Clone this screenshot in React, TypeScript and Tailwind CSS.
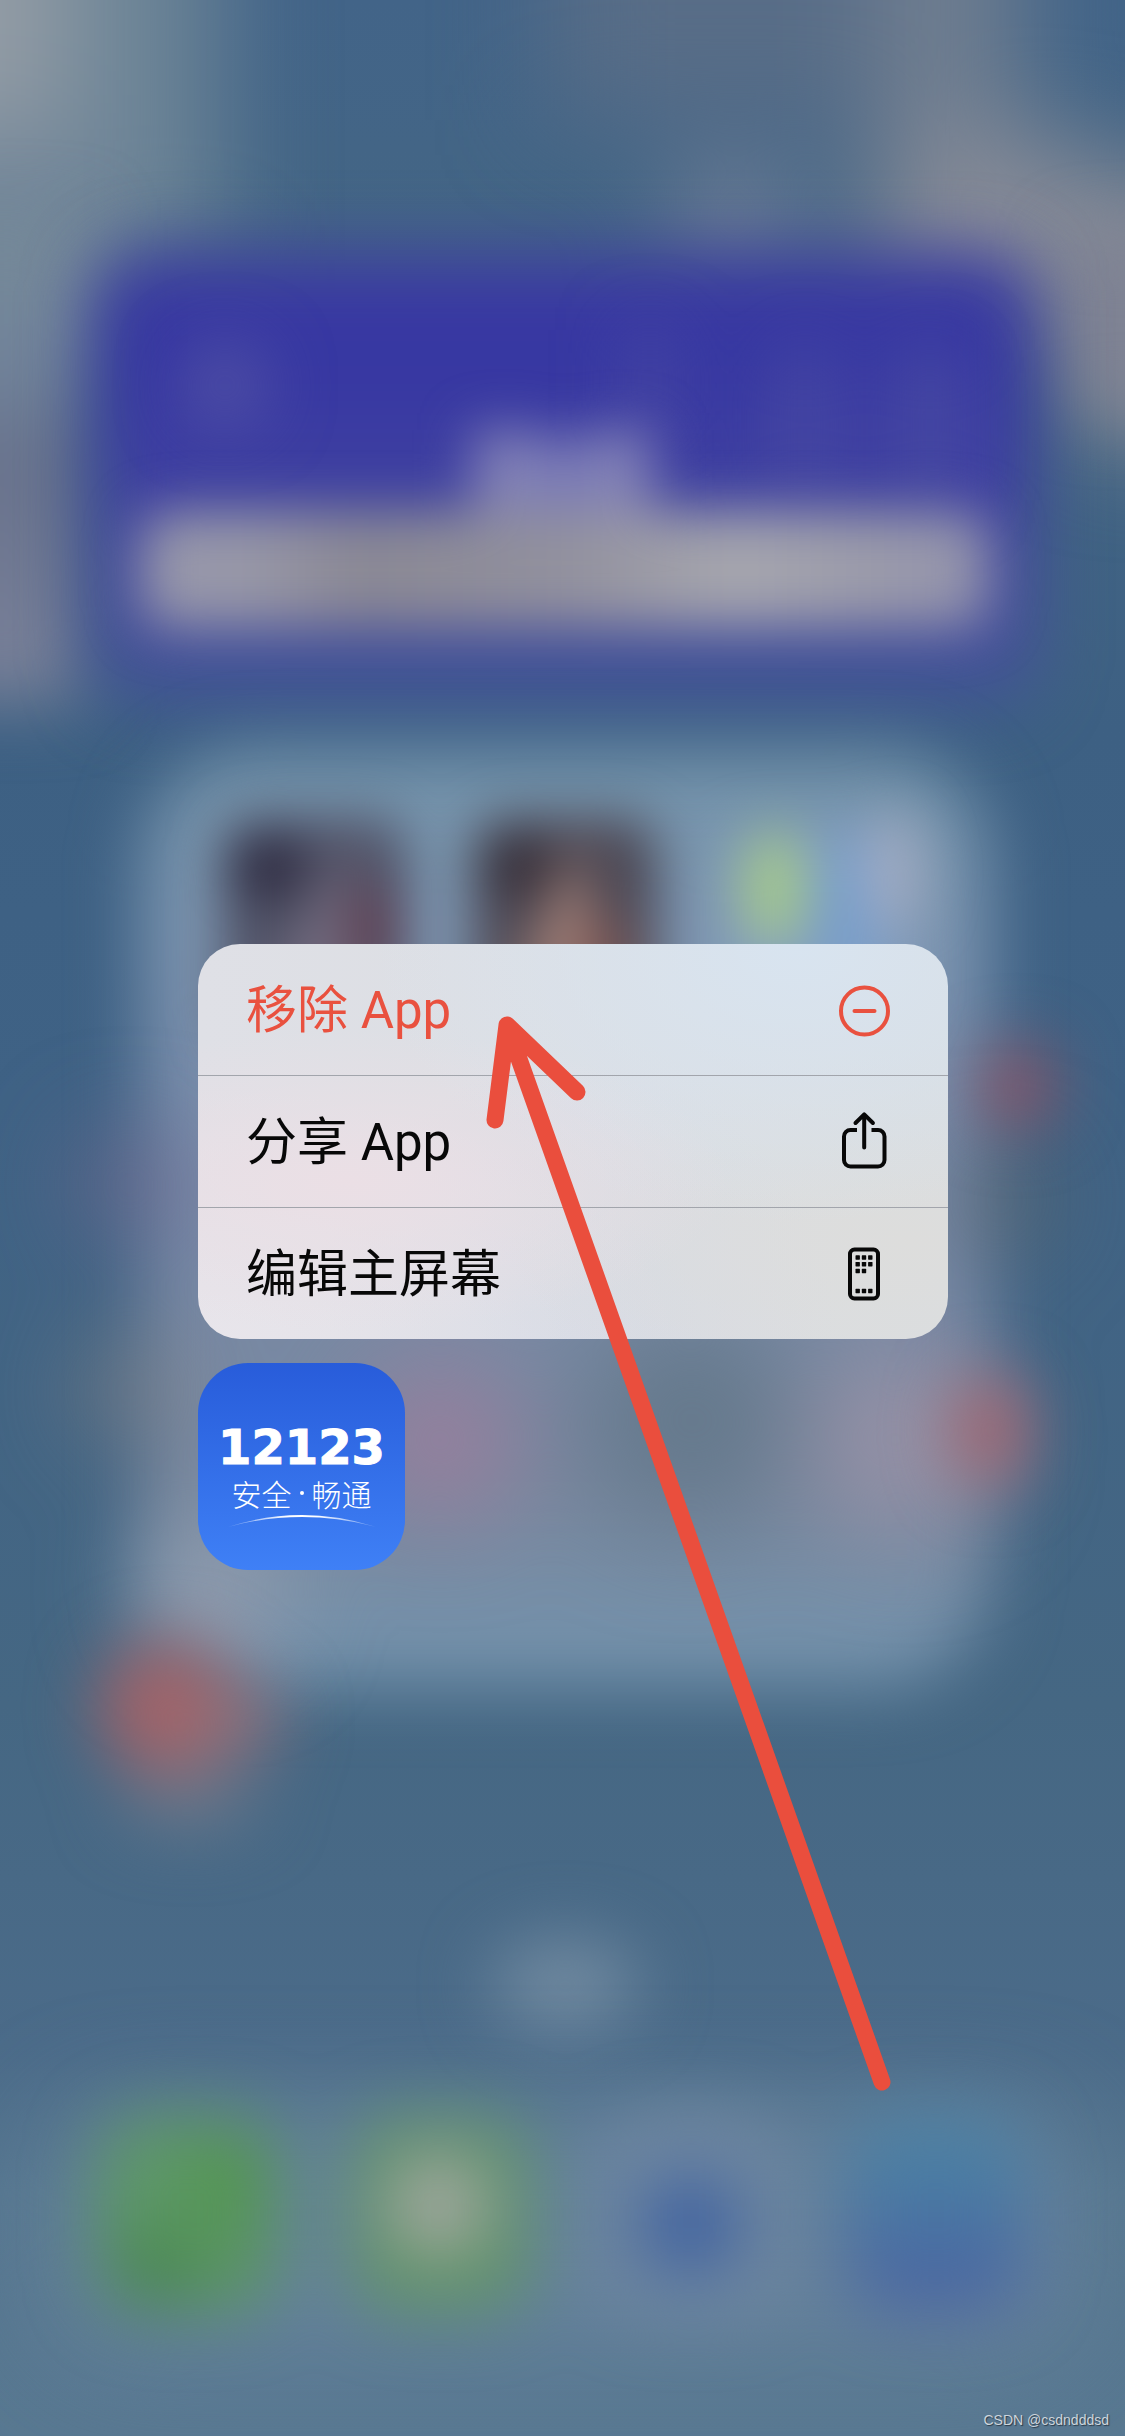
import type { ReactNode } from "react";

const sansStack = "font-[Roboto,'Noto_Sans_CJK_SC',sans-serif]";

/* ── Icons ── */
function RemoveIcon() {
  return (
    <svg viewBox="0 0 72 72" className="size-18 shrink-0" fill="none" stroke="currentColor" strokeWidth="4" aria-hidden="true">
      <circle cx="36.5" cy="37" r="23.5" />
      <path d="M26.500 37h20" strokeLinecap="round" />
    </svg>
  );
}

function ShareIcon() {
  return (
    <svg viewBox="0 0 72 72" className="size-18 shrink-0" fill="none" stroke="currentColor" strokeWidth="4" aria-hidden="true">
      <path d="M29 24h-6.500a6.500 6.500 0 0 0-6.500 6.500v23.500a6.500 6.500 0 0 0 6.500 6.500h27.500a6.500 6.500 0 0 0 6.500-6.500V30.500a6.500 6.500 0 0 0-6.500-6.500H43.500" />
      <path d="M36.200 41.500V8.500M27.500 17l8.700-8.700 8.700 8.700" strokeLinecap="round" strokeLinejoin="round" />
    </svg>
  );
}

const phoneDots = [
  [29.7, 19.5], [36, 19.5], [42.3, 19.5],
  [29.7, 26.2], [36, 26.2], [42.3, 26.2],
  [29.7, 33], [36, 33],
  [29.7, 53], [36, 53], [42.3, 53],
];

function HomeScreenIcon() {
  return (
    <svg viewBox="0 0 72 72" className="size-18 shrink-0" fill="currentColor" aria-hidden="true">
      <rect x="22" y="11.500" width="28" height="49" rx="4.500" fill="none" stroke="currentColor" strokeWidth="4" />
      {phoneDots.map(([x, y]) => (
        <rect key={`${x}-${y}`} x={x - 2.2} y={y - 2.2} width="4.400" height="4.400" rx="0.600" />
      ))}
    </svg>
  );
}

/* ── Blurred home screen ── */
function Wallpaper() {
  return (
    <svg
      viewBox="0 0 1125 2436"
      preserveAspectRatio="none"
      className="absolute inset-0 size-full"
      aria-hidden="true"
    >
      <defs>
        <filter id="b20" x="-100%" y="-100%" width="300%" height="300%" colorInterpolationFilters="sRGB">
          <feGaussianBlur stdDeviation="26" />
        </filter>
        <filter id="b30" x="-100%" y="-100%" width="300%" height="300%" colorInterpolationFilters="sRGB">
          <feGaussianBlur stdDeviation="34" />
        </filter>
        <filter id="b50" x="-100%" y="-100%" width="300%" height="300%" colorInterpolationFilters="sRGB">
          <feGaussianBlur stdDeviation="52" />
        </filter>
        <linearGradient id="sky" x1="0" y1="0" x2="0" y2="1">
          <stop offset="0" stopColor="#426488" />
          <stop offset="0.12" stopColor="#446684" />
          <stop offset="0.3" stopColor="#3d6083" />
          <stop offset="0.45" stopColor="#3f6285" />
          <stop offset="0.7" stopColor="#456783" />
          <stop offset="0.84" stopColor="#4b6b89" />
          <stop offset="0.9" stopColor="#55768f" />
          <stop offset="1" stopColor="#587891" />
        </linearGradient>
        <linearGradient id="leftEdge" x1="0" y1="0" x2="0" y2="1">
          <stop offset="0" stopColor="#768a98" />
          <stop offset="0.3" stopColor="#71839a" />
          <stop offset="0.5" stopColor="#68728c" />
          <stop offset="1" stopColor="#7b829a" />
        </linearGradient>
        <linearGradient id="widget" x1="0" y1="0" x2="0" y2="1">
          <stop offset="0" stopColor="#3f40a0" />
          <stop offset="0.2" stopColor="#3535a2" />
          <stop offset="0.5" stopColor="#3e3fa1" />
          <stop offset="0.85" stopColor="#47509c" />
          <stop offset="1" stopColor="#3d5592" />
        </linearGradient>
        <linearGradient id="bar" x1="0" y1="0" x2="1" y2="0">
          <stop offset="0" stopColor="#9696ab" />
          <stop offset="0.12" stopColor="#9898a8" />
          <stop offset="0.26" stopColor="#8a8894" />
          <stop offset="0.5" stopColor="#92919e" />
          <stop offset="0.7" stopColor="#a6a6ae" />
          <stop offset="0.85" stopColor="#9b9baa" />
          <stop offset="1" stopColor="#9292ac" />
        </linearGradient>
        <linearGradient id="folder" x1="0" y1="0" x2="0" y2="1">
          <stop offset="0" stopColor="#7393aa" />
          <stop offset="0.2" stopColor="#7e96b1" />
          <stop offset="0.45" stopColor="#7789a8" />
          <stop offset="0.8" stopColor="#78889f" />
          <stop offset="1" stopColor="#7494ae" />
        </linearGradient>
        <linearGradient id="store" x1="0" y1="0" x2="0" y2="1">
          <stop offset="0.2" stopColor="#4b80a3" />
          <stop offset="1" stopColor="#4961a2" />
        </linearGradient>
      </defs>

      <rect width="1125" height="2436" fill="url(#sky)" />

      {/* wallpaper highlights */}
      <g filter="url(#b50)">
        <rect x="-200" y="-200" width="270" height="330" fill="#939ca5" />
        <rect x="70" y="-200" width="150" height="460" fill="#6c8496" />
        <rect x="-200" y="130" width="320" height="240" fill="#728699" />
        <rect x="550" y="-150" width="340" height="270" fill="#586d87" />
        <rect x="875" y="-150" width="145" height="400" fill="#707e90" />
        <path d="M890 130L1010 130 1320 230V440H1080V330H870z" fill="#878b97" />
        <circle cx="735" cy="225" r="60" fill="#7b859b" />
      </g>
      <g filter="url(#b30)">
        <rect x="-100" y="220" width="186" height="482" fill="url(#leftEdge)" />
        <rect x="1070" y="240" width="160" height="170" fill="#7e8293" />
      </g>

      {/* widget */}
      <g filter="url(#b30)">
        <rect x="94" y="252" width="940" height="454" rx="50" fill="url(#widget)" />
      </g>
      <g filter="url(#b30)">
        <circle cx="225" cy="385" r="38" fill="#5656a5" />
        <rect x="630" y="330" width="40" height="100" fill="#4848a2" />
        <rect x="780" y="350" width="50" height="150" fill="#484aa2" />
        <rect x="900" y="350" width="60" height="150" fill="#484aa2" />
      </g>
      <g filter="url(#b20)">
        <rect x="474" y="430" width="60" height="120" fill="#8483b6" />
        <rect x="594" y="430" width="58" height="120" fill="#8483b6" />
        <rect x="524" y="440" width="80" height="100" fill="#7c7cb6" />
        <rect x="140" y="512" width="850" height="116" rx="30" fill="url(#bar)" />
      </g>

      {/* open folder */}
      <g filter="url(#b30)">
        <rect x="143" y="750" width="846" height="936" rx="110" fill="url(#folder)" />
      </g>
      <g filter="url(#b50)">
        <circle cx="440" cy="1440" r="75" fill="#9a7e9c" />
        <circle cx="690" cy="1420" r="105" fill="#65798c" />
        <circle cx="900" cy="1440" r="90" fill="#9691a6" />
        <circle cx="210" cy="1590" r="65" fill="#98a0b0" />
        <circle cx="130" cy="1390" r="42" fill="#8a8484" />
        <circle cx="130" cy="1185" r="44" fill="#76688f" />
        <circle cx="1000" cy="1200" r="42" fill="#5f6464" />
      </g>
      <g filter="url(#b20)">
        <rect x="222" y="818" width="184" height="230" rx="34" fill="#4e5064" />
        <ellipse cx="268" cy="866" rx="40" ry="32" fill="#2d2a40" />
        <path d="M265 990L345 840 355 1000z" fill="#736c80" />
        <ellipse cx="372" cy="930" rx="24" ry="48" fill="#5c3a4c" />
        <rect x="474" y="818" width="182" height="230" rx="34" fill="#4a4551" />
        <ellipse cx="518" cy="864" rx="38" ry="30" fill="#332c36" />
        <path d="M510 990L575 840 610 990z" fill="#a08078" />
        <ellipse cx="605" cy="955" rx="26" ry="36" fill="#7c5350" />
        <rect x="725" y="830" width="180" height="200" rx="34" fill="#849fc0" />
        <ellipse cx="774" cy="888" rx="34" ry="58" fill="#a3c78d" />
        <ellipse cx="846" cy="910" rx="30" ry="76" fill="#769dcc" />
        <ellipse cx="893" cy="872" rx="30" ry="60" fill="#a0abc2" />
      </g>
      <g filter="url(#b30)">
        <ellipse cx="1017" cy="1086" rx="34" ry="38" fill="#9c4f5d" />
        <ellipse cx="990" cy="1430" rx="36" ry="54" fill="#a8636c" />
      </g>
      <g filter="url(#b30)">
        <ellipse cx="168" cy="1708" rx="70" ry="66" fill="#a36368" />
        <ellipse cx="238" cy="1720" rx="42" ry="36" fill="#94727c" />
        <ellipse cx="190" cy="1800" rx="70" ry="28" fill="#6b788b" />
        <ellipse cx="565" cy="1985" rx="74" ry="46" fill="#718aa0" />
      </g>

      {/* dock */}
      <g filter="url(#b50)">
        <rect x="50" y="2110" width="1030" height="245" rx="80" fill="#66829c" />
      </g>
      <g filter="url(#b30)">
        <rect x="97" y="2116" width="182" height="196" rx="50" fill="#599560" />
        <circle cx="160" cy="2180" r="30" fill="#629972" />
        <circle cx="225" cy="2180" r="38" fill="#52964c" />
        <circle cx="155" cy="2270" r="34" fill="#45844c" />
        <rect x="349" y="2116" width="182" height="196" rx="50" fill="#5f9366" />
        <circle cx="438" cy="2205" r="50" fill="#a6a8a4" />
        <rect x="601" y="2116" width="180" height="196" rx="50" fill="#6e86a0" />
        <circle cx="690" cy="2225" r="50" fill="#3f61a0" />
        <rect x="846" y="2116" width="180" height="196" rx="50" fill="url(#store)" />
      </g>
    </svg>
  );
}

/* ── Context menu ── */
function MenuItem({ label, icon, danger }: { label: string; icon: ReactNode; danger?: boolean }) {
  return (
    <li>
      <button
        type="button"
        className={`flex h-[131px] w-full items-center justify-between px-12 text-left text-[51px] ${
          danger ? "text-[#e9513f]" : "text-[#080808]"
        }`}
      >
        <span className="pt-1">{label}</span>
        {icon}
      </button>
    </li>
  );
}

function AppIcon() {
  return (
    <a
      href="#12123"
      className="flex size-[207px] flex-col items-center overflow-hidden rounded-[50px] bg-linear-to-b from-[#285cda] to-[#3f80f6] pt-14 text-white"
    >
      <span className="font-['DejaVu_Sans',sans-serif] text-5xl leading-14 font-bold [-webkit-text-stroke:1px_white]">
        12123
      </span>
      <span className="flex items-center gap-1 font-['Noto_Sans_CJK_SC',sans-serif] text-[30px] leading-9 font-light">
        <span>安全</span>
        <span className="mx-1 size-1 rounded-full bg-white" />
        <span>畅通</span>
      </span>
      <svg viewBox="0 0 150 16" className="mt-0.5 h-4 w-[150px]" aria-hidden="true">
        <defs>
          <linearGradient id="arc">
            <stop offset="0" stopColor="#fff" stopOpacity="0.2" />
            <stop offset="0.4" stopColor="#fff" />
            <stop offset="0.6" stopColor="#fff" />
            <stop offset="1" stopColor="#fff" stopOpacity="0.2" />
          </linearGradient>
        </defs>
        <path d="M1 14Q75-10 149 14 75-6 1 14z" fill="url(#arc)" />
      </svg>
    </a>
  );
}

export default function App() {
  return (
    <div className={`relative flex min-h-screen flex-col overflow-hidden bg-[#456783] ${sansStack}`}>
      <Wallpaper />

      <main className="relative flex flex-1 flex-col gap-6 pt-236 pl-[198px]">
        <ul className="w-[750px] max-w-full divide-y divide-[#a2a5ac] overflow-hidden rounded-[42px] bg-[#dadde2] bg-[radial-gradient(ellipse_at_20%_60%,#ebdfe5,transparent_45%),radial-gradient(ellipse_at_80%_0%,#d8e4f0,transparent_50%),radial-gradient(ellipse_at_95%_75%,#dddddc,transparent_45%),radial-gradient(ellipse_at_0%_100%,#e8e5eb,transparent_45%),radial-gradient(ellipse_at_50%_100%,#d5dae5,transparent_50%),linear-gradient(to_right,#dfe0e6,#d9dde1)]">
          <MenuItem label="移除 App" icon={<RemoveIcon />} danger />
          <MenuItem label="分享 App" icon={<ShareIcon />} />
          <MenuItem label="编辑主屏幕" icon={<HomeScreenIcon />} />
        </ul>
        <AppIcon />
      </main>

      <footer className="relative flex justify-end px-4 pb-1.5 font-['Liberation_Sans',sans-serif] text-sm text-[#cdd5dc] [text-shadow:1px_1px_1px_#2b3a48]">
        CSDN @csdndddsd
      </footer>

      {/* pointer arrow */}
      <svg
        viewBox="0 0 1125 2436"
        preserveAspectRatio="none"
        className="pointer-events-none absolute inset-0 size-full"
        fill="none"
        stroke="#ea4e3d"
        strokeWidth="17"
        strokeLinecap="round"
        strokeLinejoin="round"
        aria-hidden="true"
      >
        <path d="M882 2082L507 1025M495 1120L507 1025 577 1092" />
      </svg>
    </div>
  );
}
